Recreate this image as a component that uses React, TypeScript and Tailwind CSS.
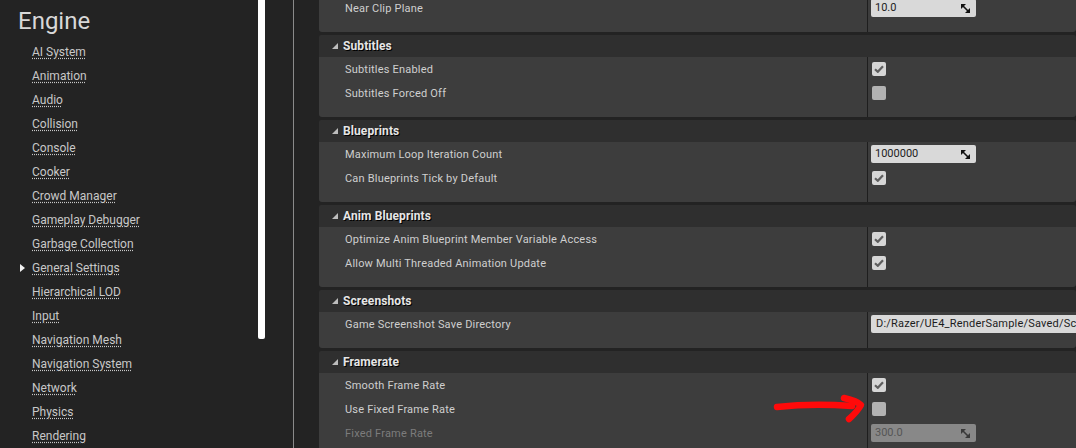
import React from "react";

type Value =
  | { kind: "check"; on: boolean }
  | { kind: "num"; text: string; disabled?: boolean }
  | { kind: "path"; text: string };

type Row = { label: string; value: Value; disabled?: boolean };
type Section = { title?: string; rows: Row[] };

const navItems = [
  "AI System",
  "Animation",
  "Audio",
  "Collision",
  "Console",
  "Cooker",
  "Crowd Manager",
  "Gameplay Debugger",
  "Garbage Collection",
  "General Settings",
  "Hierarchical LOD",
  "Input",
  "Navigation Mesh",
  "Navigation System",
  "Network",
  "Physics",
  "Rendering",
];

const sections: Section[] = [
  { rows: [{ label: "Near Clip Plane", value: { kind: "num", text: "10.0" } }] },
  {
    title: "Subtitles",
    rows: [
      { label: "Subtitles Enabled", value: { kind: "check", on: true } },
      { label: "Subtitles Forced Off", value: { kind: "check", on: false } },
    ],
  },
  {
    title: "Blueprints",
    rows: [
      { label: "Maximum Loop Iteration Count", value: { kind: "num", text: "1000000" } },
      { label: "Can Blueprints Tick by Default", value: { kind: "check", on: true } },
    ],
  },
  {
    title: "Anim Blueprints",
    rows: [
      { label: "Optimize Anim Blueprint Member Variable Access", value: { kind: "check", on: true } },
      { label: "Allow Multi Threaded Animation Update", value: { kind: "check", on: true } },
    ],
  },
  {
    title: "Screenshots",
    rows: [
      {
        label: "Game Screenshot Save Directory",
        value: { kind: "path", text: "D:/Razer/UE4_RenderSample/Saved/Sc" },
      },
    ],
  },
  {
    title: "Framerate",
    rows: [
      { label: "Smooth Frame Rate", value: { kind: "check", on: true } },
      { label: "Use Fixed Frame Rate", value: { kind: "check", on: false } },
      { label: "Fixed Frame Rate", value: { kind: "num", text: "300.0", disabled: true }, disabled: true },
    ],
  },
];

function SpinIcon({ color }: { color: string }) {
  return (
    <svg width="9" height="9" viewBox="0 0 9 9" className="shrink-0">
      <polygon points="0,0 5,0 0,5" fill={color} />
      <polygon points="9,4 9,9 4,9" fill={color} />
      <line x1="1" y1="1" x2="8" y2="8" stroke={color} strokeWidth="1.6" />
    </svg>
  );
}

function ValueCell({ value }: { value: Value }) {
  if (value.kind === "check") {
    return (
      <div
        className={
          "ml-[1px] w-[14px] h-[14px] rounded-[2px] flex items-center justify-center " +
          (value.on ? "bg-[#d6d6d6]" : "bg-[#b2b2b2]")
        }
      >
        {value.on && (
          <svg width="10" height="8" viewBox="0 0 10 8">
            <path d="M1 4.2 L3.8 6.8 L9 1.2" stroke="#5e5e5e" strokeWidth="2.2" fill="none" />
          </svg>
        )}
      </div>
    );
  }
  if (value.kind === "path") {
    return (
      <div className="h-[18px] w-[220px] shrink-0 rounded-l-[2px] bg-[#d9d9d9] pl-[5px] pt-[1px] flex items-center text-[11px] tracking-[0.2px] text-[#1c1c1c] whitespace-nowrap">
        {value.text}
      </div>
    );
  }
  return (
    <div
      className={
        "h-[18px] w-[105px] rounded-[2px] pl-[4px] pr-[6px] flex items-center justify-between text-[11px] " +
        (value.disabled ? "bg-[#888888] text-[#555555]" : "bg-[#d9d9d9] text-[#1c1c1c]")
      }
    >
      <span className="pt-[1px]">{value.text}</span>
      <SpinIcon color={value.disabled ? "#3a3a3a" : "#111111"} />
    </div>
  );
}

function SettingsSection({ section, first }: { section: Section; first: boolean }) {
  return (
    <div className={first ? "-mt-[4px]" : "mt-[3px]"}>
      {section.title && (
        <div className="h-[22px] bg-[#2f2f2f] rounded-t-[2px] flex items-center pl-[13px] gap-[5px]">
          <svg width="6" height="6" viewBox="0 0 6 6">
            <polygon points="6,0 6,6 0,6" fill="#bdbdbd" />
          </svg>
          <span className="text-[12px] font-bold tracking-[0.1px] text-[#e6e6e6] [text-shadow:1px_1px_0_#000]">
            {section.title}
          </span>
        </div>
      )}
      <div className="bg-[#3d3d3d] rounded-b-[3px]">
        {section.rows.map((row) => (
          <div key={row.label} className="flex h-[24px]">
            <div
              className={
                "w-[548px] shrink-0 pl-[26px] pt-[2px] flex items-center text-[11px] tracking-[0.2px] " +
                (row.disabled ? "text-[#7c7c7c]" : "text-[#cfcfcf]")
              }
            >
              {row.label}
            </div>
            <div className="flex-1 border-l border-[#1e1e1e] pl-[3px] flex items-center overflow-hidden">
              <ValueCell value={row.value} />
            </div>
          </div>
        ))}
        <div className="flex h-[12px]">
          <div className="w-[548px] shrink-0" />
          <div className="flex-1 border-l border-[#1e1e1e]" />
        </div>
      </div>
    </div>
  );
}

export default function App() {
  return (
    <div className="relative w-[1076px] h-[448px] overflow-hidden bg-[#232323] flex font-['Roboto',sans-serif]">
      {/* Left category list */}
      <div className="w-[258px] shrink-0 pl-[18px] pt-[7px]">
        <div className="text-[24px] leading-[28px] text-[#d8d8d8]">Engine</div>
        <ul className="mt-[5px]">
          {navItems.map((item) => (
            <li key={item} className="flex items-center h-[24px]">
              <div className="w-[14px] shrink-0">
                {item === "General Settings" && (
                  <svg width="5" height="8" viewBox="0 0 5 8" className="ml-[2px]">
                    <polygon points="0,0 5,4 0,8" fill="#f2f2f2" />
                  </svg>
                )}
              </div>
              <span className="text-[12px] text-[#c8c8c8] underline decoration-dotted underline-offset-[2px]">
                {item}
              </span>
            </li>
          ))}
        </ul>
      </div>

      {/* Scrollbar */}
      <div className="w-[7px] h-[339px] shrink-0 bg-white rounded-b-[2px]" />
      <div className="w-[28px] shrink-0" />
      <div className="w-px shrink-0 bg-[#8a8a8a]" />
      <div className="w-[25px] shrink-0" />

      {/* Settings details */}
      <div className="flex-1 overflow-hidden">
        {sections.map((s, i) => (
          <SettingsSection key={s.title ?? "top"} section={s} first={i === 0} />
        ))}
      </div>

      {/* Red annotation arrow */}
      <svg className="absolute left-0 top-0 pointer-events-none" width="1076" height="448">
        <g stroke="#ff0a0a" strokeWidth="6.5" strokeLinecap="round" strokeLinejoin="round" fill="none">
          <path d="M777 407 Q812 403 852 406" />
          <path d="M844 398 Q857 401 861 405 Q857 412 849 419" />
        </g>
      </svg>
    </div>
  );
}
